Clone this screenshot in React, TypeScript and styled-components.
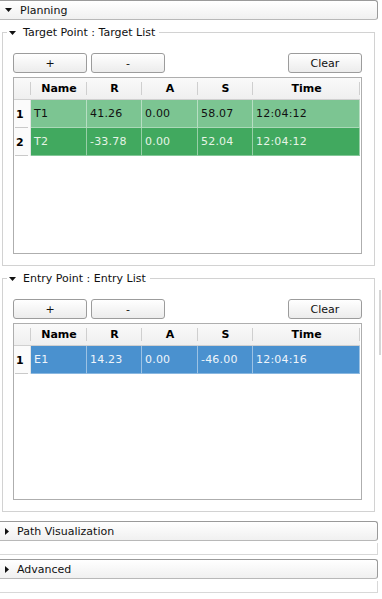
import React from "react";
import styled, { createGlobalStyle } from "styled-components";

const Global = createGlobalStyle`
  html, body { margin: 0; padding: 0; background: #ffffff; }
  body { font-family: "DejaVu Sans", "Liberation Sans", sans-serif; font-size: 11px; color: #1a1a1a; }
  * { box-sizing: border-box; }
`;

const Page = styled.div`
  position: relative;
  width: 382px;
  height: 599px;
  overflow: hidden;
  background: #ffffff;
`;

const SectionHeader = styled.div`
  display: flex;
  align-items: center;
  gap: 8px;
  height: 20px;
  margin: 0 4px 0 -4px;
  padding-left: 8px;
  border: 1px solid #9a9a9a;
  border-bottom-color: #b8b8b8;
  border-radius: 3px;
  background: linear-gradient(#ffffff, #f0f0f0);
  color: #111;
  font-size: 11px;
`;

const SectionBody = styled.div<{ $h?: number }>`
  margin: 2px 4px 0 -4px;
  height: ${(p) => (p.$h ? `${p.$h}px` : "auto")};
  border: 1px solid #d8d8d8;
  border-top: none;
`;

const PlanningBody = styled.div`
  padding-top: 12px;
  padding-bottom: 5px;
  display: flex;
  flex-direction: column;
  gap: 12px;
`;

const Group = styled.div`
  position: relative;
  margin: 0 7px 0 2px;
  border: 1px solid #d2d2d2;
  padding: 20px 12px 11px 10px;
`;

const GroupTitle = styled.div`
  position: absolute;
  top: -7px;
  left: 4px;
  display: flex;
  align-items: center;
  gap: 7px;
  padding: 0 4px 0 2px;
  background: #ffffff;
  line-height: 13px;
  color: #111;
`;

const ButtonRow = styled.div`
  display: flex;
  gap: 4px;
  height: 20px;
`;

const Button = styled.button<{ $push?: boolean }>`
  width: 74px;
  height: 20px;
  margin-left: ${(p) => (p.$push ? "auto" : "0")};
  padding: 0;
  border: 1px solid #9c9c9c;
  border-radius: 3px;
  background: linear-gradient(#ffffff, #ececec);
  font-family: "DejaVu Sans", "Liberation Sans", sans-serif;
  font-size: 11px;
  color: #111;
`;

const Table = styled.div`
  margin-top: 4px;
  height: 177px;
  border: 1px solid #aeaeae;
  background: #ffffff;
  display: grid;
  grid-template-columns: 17px 56px 55px 56px 55px 107px;
  grid-auto-rows: 28px;
  grid-template-rows: 22px;
  align-content: start;
`;

const HeadCell = styled.div`
  position: relative;
  display: flex;
  align-items: center;
  justify-content: center;
  font-weight: bold;
  color: #000;
  background: linear-gradient(#fafafa, #efefef);
  border-bottom: 1px solid #d0d0d0;
  &::after {
    content: "";
    position: absolute;
    right: 0;
    top: 4px;
    bottom: 4px;
    width: 1px;
    background: #cfcfcf;
  }
`;

const RowHead = styled.div`
  position: relative;
  display: flex;
  align-items: center;
  padding-left: 2px;
  font-weight: bold;
  color: #000;
  background: #fbfbfb;
  border-right: 1px solid #e4e4e4;
  &::after {
    content: "";
    position: absolute;
    left: 1px;
    right: 2px;
    bottom: 0;
    height: 1px;
    background: #c9c9c9;
  }
`;

const Cell = styled.div<{ $bg: string; $fg: string }>`
  display: flex;
  align-items: center;
  padding-left: 3px;
  background: ${(p) => p.$bg};
  color: ${(p) => p.$fg};
  border-right: 1px solid rgba(255, 255, 255, 0.45);
  border-bottom: 1px solid rgba(255, 255, 255, 0.35);
  letter-spacing: 0.2px;
`;

const SideHandle = styled.div`
  position: absolute;
  left: 379px;
  top: 290px;
  width: 2px;
  height: 65px;
  background: #d6d6d6;
`;

const Collapsed = styled.div`
  margin-top: 4px;
`;

const DownArrow = () => (
  <svg width={7} height={4} viewBox="0 0 7 4">
    <path d="M0 0 L7 0 L3.5 4 Z" fill="#111" />
  </svg>
);

const RightArrow = () => (
  <svg width={4} height={7} viewBox="0 0 4 7">
    <path d="M0 0 L4 3.5 L0 7 Z" fill="#111" />
  </svg>
);

type Row = { name: string; r: string; a: string; s: string; t: string; bg: string; fg: string };

const headers = ["Name", "R", "A", "S", "Time"];

const DataTable = ({ rows }: { rows: Row[] }) => (
  <Table>
    <HeadCell />
    {headers.map((h) => (
      <HeadCell key={h}>{h}</HeadCell>
    ))}
    {rows.map((r, i) => (
      <React.Fragment key={r.name}>
        <RowHead>{i + 1}</RowHead>
        {[r.name, r.r, r.a, r.s, r.t].map((v, j) => (
          <Cell key={j} $bg={r.bg} $fg={r.fg}>
            {v}
          </Cell>
        ))}
      </React.Fragment>
    ))}
  </Table>
);

const PointGroup = ({ title, rows }: { title: string; rows: Row[] }) => (
  <Group>
    <GroupTitle>
      <DownArrow />
      <span>{title}</span>
    </GroupTitle>
    <ButtonRow>
      <Button>+</Button>
      <Button>-</Button>
      <Button $push>Clear</Button>
    </ButtonRow>
    <DataTable rows={rows} />
  </Group>
);

const targets: Row[] = [
  { name: "T1", r: "41.26", a: "0.00", s: "58.07", t: "12:04:12", bg: "#7cc592", fg: "#111" },
  { name: "T2", r: "-33.78", a: "0.00", s: "52.04", t: "12:04:12", bg: "#41a95f", fg: "#e6f4e6" },
];

const entries: Row[] = [
  { name: "E1", r: "14.23", a: "0.00", s: "-46.00", t: "12:04:16", bg: "#4a91cf", fg: "#eef4fa" },
];

export default function App() {
  return (
    <Page>
      <Global />
      <SectionHeader>
        <DownArrow />
        <span>Planning</span>
      </SectionHeader>
      <PlanningBody>
        <PointGroup title="Target Point : Target List" rows={targets} />
        <PointGroup title="Entry Point : Entry List" rows={entries} />
      </PlanningBody>
      <Collapsed>
        <SectionHeader>
          <RightArrow />
          <span>Path Visualization</span>
        </SectionHeader>
        <SectionBody $h={12} />
      </Collapsed>
      <Collapsed>
        <SectionHeader>
          <RightArrow />
          <span>Advanced</span>
        </SectionHeader>
        <SectionBody $h={12} />
      </Collapsed>
      <SideHandle />
    </Page>
  );
}
